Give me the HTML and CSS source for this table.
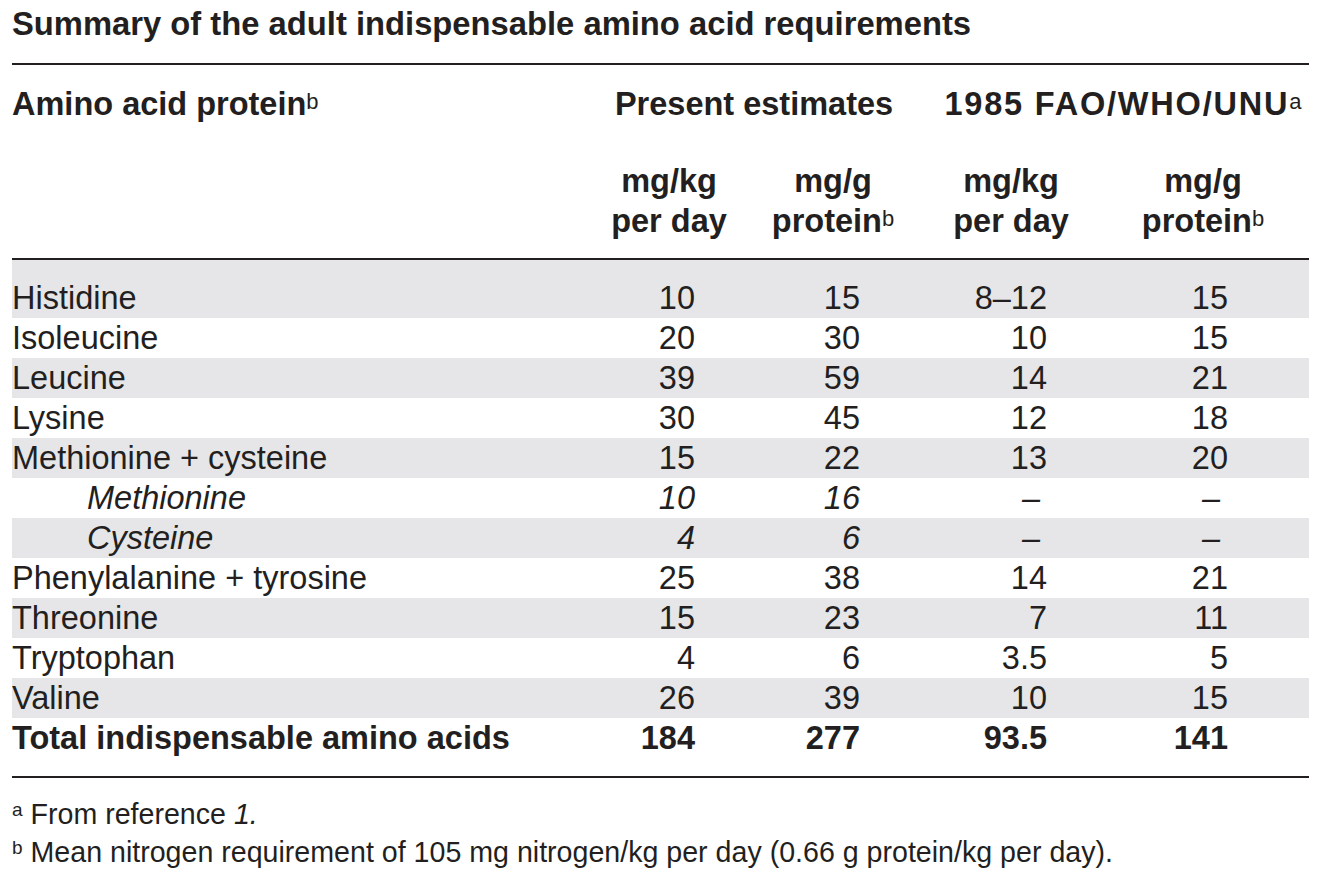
FILE: index.html
```html
<!DOCTYPE html>
<html lang="en">
<head>
<meta charset="utf-8">
<title>Summary of the adult indispensable amino acid requirements</title>
<link rel="stylesheet" href="styles.css">
</head>
<body>
<div class="page">
  <h1 class="title">Summary of the adult indispensable amino acid requirements</h1>
  <table class="req">
    <colgroup>
      <col class="c-label">
      <col class="c-1">
      <col class="c-2">
      <col class="c-3">
      <col class="c-4">
    </colgroup>
    <thead>
      <tr class="h1">
        <th class="lbl">Amino acid protein<sup class="sup">b</sup></th>
        <th colspan="2" class="grp grp-present">Present estimates</th>
        <th colspan="2" class="grp grp-fao">1985 FAO/WHO/UNU<sup class="sup">a</sup></th>
      </tr>
      <tr class="h2">
        <th></th>
        <th class="unit">mg/kg<br>per day</th>
        <th class="unit">mg/g<br>protein<sup class="sup">b</sup></th>
        <th class="unit">mg/kg<br>per day</th>
        <th class="unit">mg/g<br>protein<sup class="sup">b</sup></th>
      </tr>
    </thead>
    <tbody>
      <tr class="g first"><td class="lbl">Histidine</td><td>10</td><td>15</td><td>8–12</td><td>15</td></tr>
      <tr><td class="lbl">Isoleucine</td><td>20</td><td>30</td><td>10</td><td>15</td></tr>
      <tr class="g"><td class="lbl">Leucine</td><td>39</td><td>59</td><td>14</td><td>21</td></tr>
      <tr><td class="lbl">Lysine</td><td>30</td><td>45</td><td>12</td><td>18</td></tr>
      <tr class="g"><td class="lbl">Methionine + cysteine</td><td>15</td><td>22</td><td>13</td><td>20</td></tr>
      <tr class="it"><td class="lbl sub">Methionine</td><td>10</td><td>16</td><td class="dash">–</td><td class="dash">–</td></tr>
      <tr class="g it"><td class="lbl sub">Cysteine</td><td>4</td><td>6</td><td class="dash">–</td><td class="dash">–</td></tr>
      <tr><td class="lbl">Phenylalanine + tyrosine</td><td>25</td><td>38</td><td>14</td><td>21</td></tr>
      <tr class="g"><td class="lbl">Threonine</td><td>15</td><td>23</td><td>7</td><td>11</td></tr>
      <tr><td class="lbl">Tryptophan</td><td>4</td><td>6</td><td>3.5</td><td>5</td></tr>
      <tr class="g"><td class="lbl">Valine</td><td>26</td><td>39</td><td>10</td><td>15</td></tr>
      <tr class="total"><td class="lbl">Total indispensable amino acids</td><td>184</td><td>277</td><td>93.5</td><td>141</td></tr>
    </tbody>
  </table>
  <div class="notes">
    <p class="note"><sup class="fsup">a</sup> From reference <i>1.</i></p>
    <p class="note"><sup class="fsup">b</sup> Mean nitrogen requirement of 105 mg nitrogen/kg per day (0.66 g protein/kg per day).</p>
  </div>
</div>
</body>
</html>
```
FILE: styles.css
```css
html, body {
  margin: 0;
  padding: 0;
  background: #ffffff;
}

body {
  font-family: "Liberation Sans", Arial, Helvetica, sans-serif;
  color: #231f20;
}

.page {
  padding: 4px 16px 0 12px;
}

.title {
  margin: 0;
  font-size: 32.75px;
  line-height: 40px;
  font-weight: bold;
  height: 40px;
  padding-bottom: 19px;
  white-space: nowrap;
}

.req {
  width: 1297px;
  border-collapse: collapse;
  table-layout: fixed;
  font-size: 32.5px;
  line-height: 40px;
}

.c-label { width: 585px; }
.c-1 { width: 144px; }
.c-2 { width: 184px; }
.c-3 { width: 172px; }
.c-4 { width: 212px; }

.req thead {
  border-top: 2px solid #231f20;
  border-bottom: 2px solid #231f20;
}

.req th {
  font-weight: bold;
  padding: 0;
  vertical-align: top;
  white-space: nowrap;
}

.req .h1 th {
  padding-top: 19px;
}

.req .h1 .lbl {
  text-align: left;
}

.req th.grp {
  text-align: center;
}

.req th.grp-present {
  padding-right: 14px;
}

.req th.grp-fao {
  padding-left: 12px;
  letter-spacing: 1.8px;
}

.req .h2 th {
  padding-top: 37px;
  padding-bottom: 17px;
}

.req th.unit {
  text-align: center;
}

.req .sup {
  font-size: 22px;
  font-weight: normal;
  line-height: 0;
  letter-spacing: 0;
  vertical-align: 6px;
  margin-left: 0;
}

.req td {
  padding: 0;
  text-align: right;
  white-space: nowrap;
}

.req td.lbl {
  text-align: left;
}

.req td.sub {
  padding-left: 75px;
}

.req td:nth-child(2) { padding-right: 46px; }
.req td:nth-child(3) { padding-right: 65px; }
.req td:nth-child(4) { padding-right: 50px; }
.req td:nth-child(5) { padding-right: 81px; }

.req td.dash:nth-child(4) { padding-right: 57px; }
.req td.dash:nth-child(5) { padding-right: 89px; }

.req tr.g td {
  background: #e6e6e8;
}

.req tr.first td {
  padding-top: 18px;
}

.req tr.it td {
  font-style: italic;
}

.req tr.total td {
  font-weight: bold;
  padding-bottom: 18px;
}

.req tbody {
  border-bottom: 2px solid #231f20;
}

.notes {
  padding-top: 17px;
}

.note {
  margin: 0;
  font-size: 28.6px;
  line-height: 38px;
  white-space: nowrap;
}

.fsup {
  font-size: 19px;
  line-height: 0;
  vertical-align: 8px;
}
```
